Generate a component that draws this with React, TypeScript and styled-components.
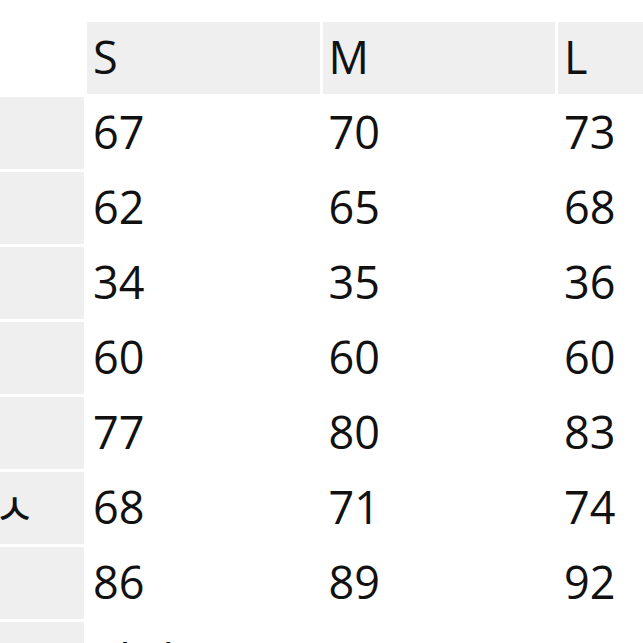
import React from 'react';
import styled, { createGlobalStyle } from 'styled-components';

const GlobalStyle = createGlobalStyle`
  html, body {
    margin: 0;
    padding: 0;
    background: #ffffff;
    overflow: hidden;
  }
  body {
    font-family: "Open Sans", "Noto Sans", "Noto Sans CJK KR", sans-serif;
    color: #111111;
  }
`;

const Page = styled.div`
  width: 643px;
  height: 643px;
  overflow: hidden;
  padding-top: 22px;
  box-sizing: border-box;
`;

// the label column runs off the left edge of the shot
const SizeTable = styled.div`
  display: grid;
  grid-template-columns: 200px repeat(3, 232.5px);
  grid-auto-rows: 72px;
  gap: 3px;
  margin-left: -116px;
`;

type Tone = 'corner' | 'header' | 'label' | 'value';

const Cell = styled.div<{ $tone: Tone }>`
  display: flex;
  align-items: center;
  padding-left: ${({ $tone }) => ($tone === 'label' ? '27px' : '6px')};
  font-size: 45px;
  font-weight: 380;
  line-height: 1;
  white-space: nowrap;
  background: ${({ $tone }) =>
    $tone === 'header' || $tone === 'label' ? '#efefef' : '#ffffff'};
  color: #111111;
`;

const ValueText = styled.span<{ $note?: boolean }>`
  padding-top: ${({ $note }) => ($note ? '8px' : '0')};
  padding-bottom: ${({ $note }) => ($note ? '0' : '3px')};
  font-family: "Open Sans", "Noto Sans CJK KR", sans-serif;
`;

const sizes = ['S', 'M', 'L'];

const rows = [
  { label: '총장', values: [67, 70, 73] },
  { label: '어깨', values: [62, 65, 68] },
  { label: '가슴', values: [34, 35, 36] },
  { label: '암홀', values: [60, 60, 60] },
  { label: '소매', values: [77, 80, 83] },
  { label: '허리ㅅ', values: [68, 71, 74] },
  { label: '밑단', values: [86, 89, 92] },
];

const App: React.FC = () => {
  return (
    <Page>
      <GlobalStyle />
      <SizeTable>
        <Cell $tone="corner" />
        {sizes.map((size) => (
          <Cell key={size} $tone="header">
            <ValueText>{size}</ValueText>
          </Cell>
        ))}
        {rows.map((row) => (
          <React.Fragment key={row.label}>
            <Cell $tone="label">{row.label}</Cell>
            {row.values.map((v, i) => (
              <Cell key={i} $tone="value">
                <ValueText>{v}</ValueText>
              </Cell>
            ))}
          </React.Fragment>
        ))}
        <Cell $tone="label" />
        <Cell $tone="value">
          <ValueText $note>단위 (cm)</ValueText>
        </Cell>
        <Cell $tone="value" />
        <Cell $tone="value" />
      </SizeTable>
    </Page>
  );
};

export default App;
